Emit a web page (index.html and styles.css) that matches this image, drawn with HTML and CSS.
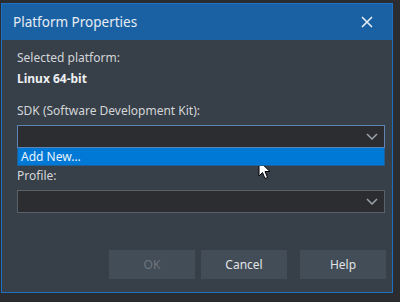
FILE: index.html
```html
<!DOCTYPE html>
<html>
<head>
    <title>Platform Properties</title>
    <link rel="stylesheet" href="styles.css">
</head>
<body>
    <div class="dialog">
        <div class="titlebar">
            <span class="title">Platform Properties</span>
            <svg class="close" width="12" height="12" viewBox="0 0 12 12">
                <path d="M1 1 L11 11 M11 1 L1 11" stroke="#e8eef5" stroke-width="1.6" fill="none"/>
            </svg>
        </div>
        <div class="content">
            <div class="label">Selected platform:</div>
            <div class="label value">Linux 64-bit</div>
            <div class="label section">SDK (Software Development Kit):</div>
            <div class="combo-wrap">
                <div class="combo focused">
                    <svg class="chevron" width="12" height="7" viewBox="0 0 12 7">
                        <path d="M1 1 L6 6 L11 1" stroke="#9ba2a9" stroke-width="1.5" fill="none"/>
                    </svg>
                </div>
                <div class="dropdown">Add New…</div>
            </div>
            <div class="label section">Profile:</div>
            <div class="combo">
                <svg class="chevron" width="12" height="7" viewBox="0 0 12 7">
                    <path d="M1 1 L6 6 L11 1" stroke="#9ba2a9" stroke-width="1.5" fill="none"/>
                </svg>
            </div>
            <div class="buttons">
                <button class="btn disabled">OK</button>
                <button class="btn">Cancel</button>
                <button class="btn help">Help</button>
            </div>
        </div>
    </div>

    <!-- mouse pointer -->
    <svg class="cursor" width="14" height="21" viewBox="0 0 14 21">
        <path d="M1 1 L1 16 L4.5 12.5 L7 18.5 L9.5 17.5 L7 11.5 L12 11.5 Z" fill="#ffffff" stroke="#000000" stroke-width="1"/>
    </svg>
</body>
</html>
```

FILE: styles.css
```css
body {
    margin: 0;
    background: #2b2c2f;
    font-family: "Noto Sans", "Open Sans", sans-serif;
    font-size: 12px;
    color: #d3d6d9;
    position: relative;
    height: 302px;
    overflow: hidden;
}
.dialog {
    margin: 3px 0 0 1px;
    width: 390px;
    height: 288px;
    border: 1px solid #1c71c4;
    background: #373f48;
    display: flex;
    flex-direction: column;
}
.titlebar {
    height: 36px;
    background: #1a61a3;
    display: flex;
    align-items: center;
    justify-content: space-between;
    padding: 0 19px 0 11px;
}
.title {
    font-size: 13.5px;
    color: #e6ecf3;
}
.content {
    padding: 10px 4px 0 15px;
    display: flex;
    flex-direction: column;
}
.label {
    line-height: 16px;
}
.value {
    margin-top: 5px;
    font-weight: bold;
    color: #eef0f2;
}
.section {
    margin-top: 16px;
    margin-bottom: 6px;
}
.combo-wrap {
    position: relative;
}
.combo {
    height: 21px;
    width: 360px;
    border: 1px solid #59616a;
    background: #2b2d31;
    display: flex;
    align-items: center;
    justify-content: flex-end;
    padding-right: 6px;
    box-sizing: content-box;
}
.combo.focused {
    border-color: #5b84b3;
}
.dropdown {
    position: absolute;
    left: 0;
    top: 23px;
    width: 363px;
    height: 17px;
    line-height: 17px;
    padding-left: 3px;
    background: #0079d6;
    color: #eaf3fb;
    border: 1px solid #1f5f96;
    border-top: none;
    box-sizing: content-box;
    z-index: 2;
}
.combo-wrap + .section {
    margin-top: 20px;
}
.buttons {
    display: flex;
    margin-top: 37px;
    padding-left: 92px;
}
.btn {
    flex-shrink: 0;
    width: 86px;
    height: 29px;
    border: none;
    background: #434d57;
    color: #e0e3e6;
    font-family: inherit;
    font-size: 12px;
    margin-right: 6px;
}
.btn.help {
    margin-left: 7px;
    margin-right: 0;
}
.btn.disabled {
    color: #6d757d;
}
.cursor {
    position: absolute;
    left: 258px;
    top: 160px;
}
```
